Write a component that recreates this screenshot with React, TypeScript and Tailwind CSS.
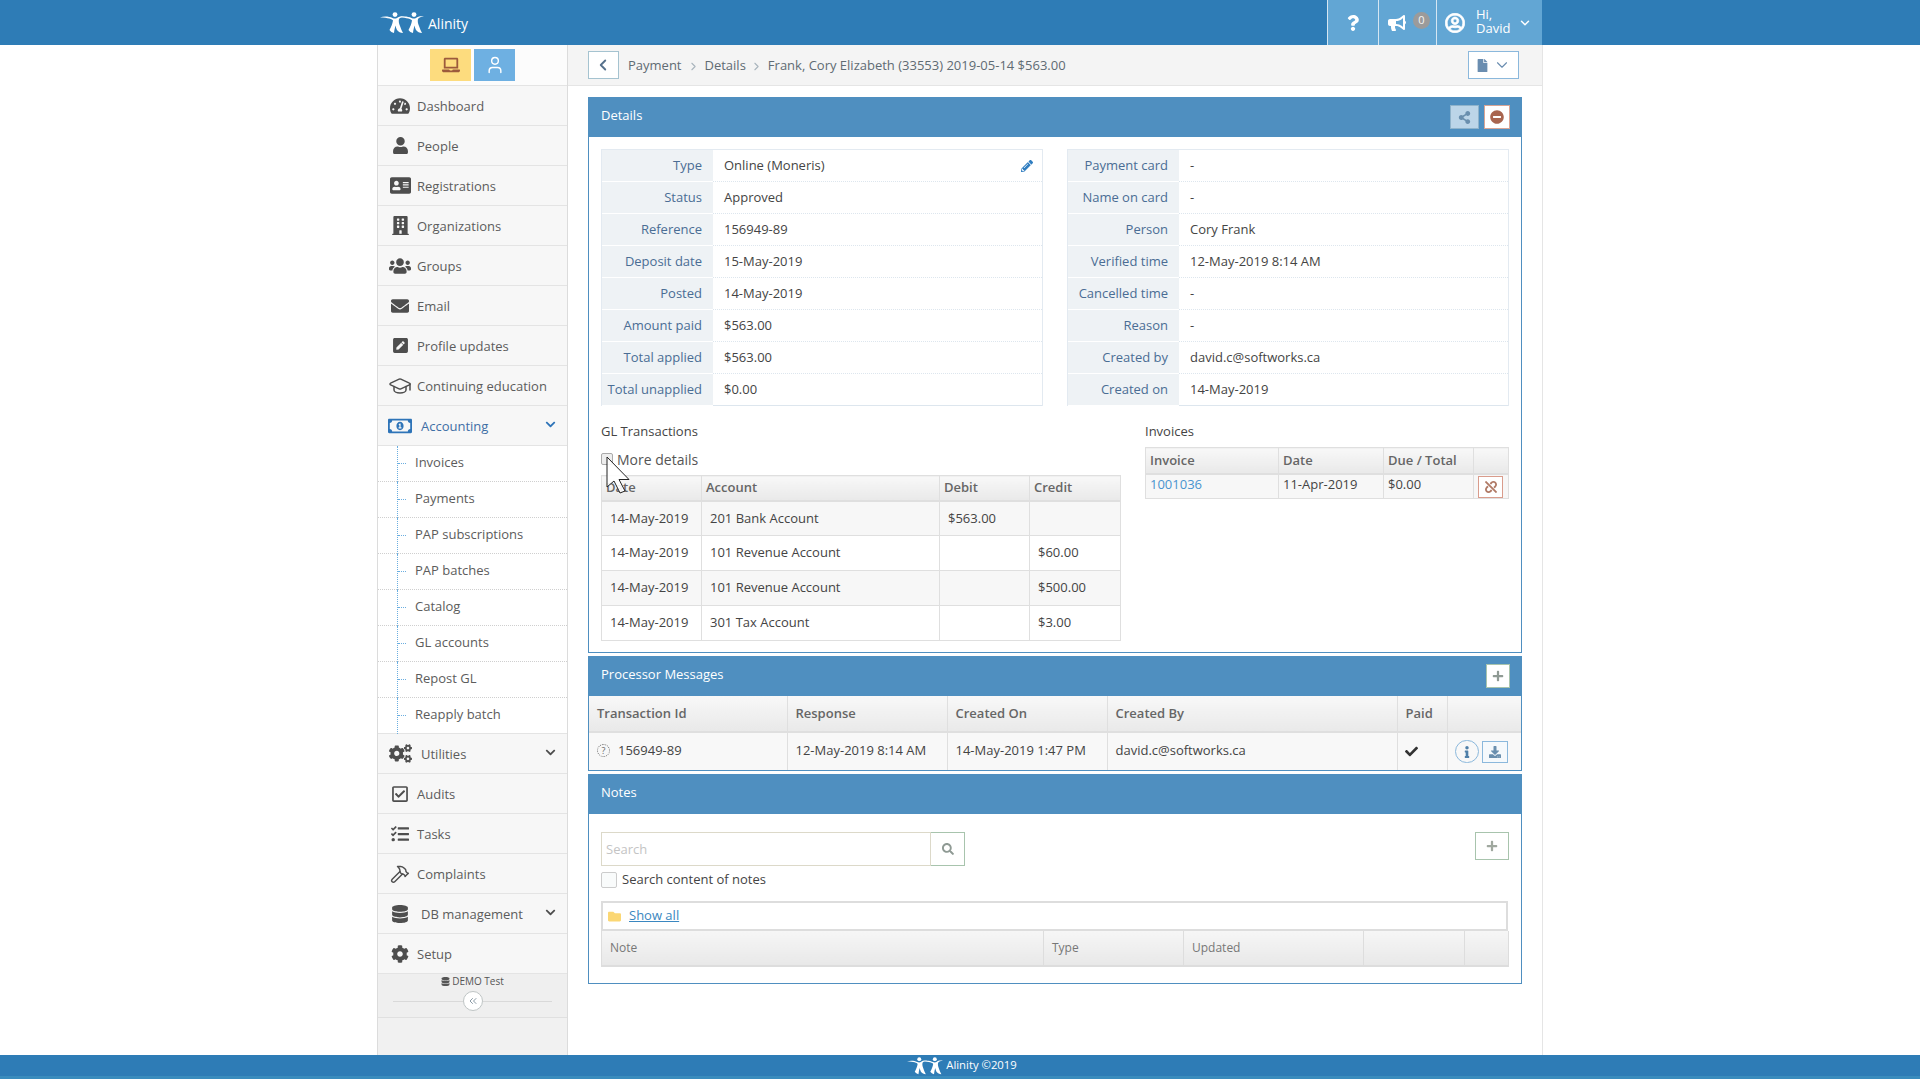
import * as React from "react";
import { ChevronDown, ChevronLeft, ChevronRight, ChevronsLeft, GraduationCap, Hammer, User } from "lucide-react";
import {
  FaAddressCard,
  FaBullhorn,
  FaCheck,
  FaChevronDown,
  FaCog,
  FaCogs,
  FaDatabase,
  FaDownload,
  FaEnvelope,
  FaFile,
  FaFolder,
  FaInfo,
  FaLaptop,
  FaMinusCircle,
  FaPencilAlt,
  FaPenSquare,
  FaPlus,
  FaQuestion,
  FaRegCheckSquare,
  FaRegMoneyBillAlt,
  FaRegUserCircle,
  FaSearch,
  FaShareAlt,
  FaTachometerAlt,
  FaTasks,
  FaUnlink,
  FaUser,
  FaUsers,
  FaBuilding,
} from "react-icons/fa";

const accountingLinks = ["Invoices", "Payments", "PAP subscriptions", "PAP batches", "Catalog", "GL accounts", "Repost GL", "Reapply batch"];

const leftDetails = [
  ["Type", "Online (Moneris)"],
  ["Status", "Approved"],
  ["Reference", "156949-89"],
  ["Deposit date", "15-May-2019"],
  ["Posted", "14-May-2019"],
  ["Amount paid", "$563.00"],
  ["Total applied", "$563.00"],
  ["Total unapplied", "$0.00"],
];

const rightDetails = [
  ["Payment card", "-"],
  ["Name on card", "-"],
  ["Person", "Cory Frank"],
  ["Verified time", "12-May-2019 8:14 AM"],
  ["Cancelled time", "-"],
  ["Reason", "-"],
  ["Created by", "david.c@softworks.ca"],
  ["Created on", "14-May-2019"],
];

const glRows = [
  ["14-May-2019", "201 Bank Account", "$563.00", ""],
  ["14-May-2019", "101 Revenue Account", "", "$60.00"],
  ["14-May-2019", "101 Revenue Account", "", "$500.00"],
  ["14-May-2019", "301 Tax Account", "", "$3.00"],
];

function Logo({ className }: { className: string }) {
  const figure =
    "M0 5.5C4 4 9 4.5 12.5 6C14.3 6.8 15.7 6.8 17 6C19 4.6 21.5 4 25 4.6C22 4.8 20 5.6 19 7C18.5 9 18.8 11 20 14C21 17 22 19 23 21C20.5 21 18.5 20 17 18C16.2 16.5 15.8 15 15.5 13.5C15 15.5 14.3 18 14 21C12 20.5 10.5 19.5 9.5 18C11 15 12.5 12 13 8.5C12.5 7 8 5.7 0 5.5Z";
  return (
    <svg viewBox="0 0 44 22" className={className} fill="white">
      <circle cx="15" cy="2.6" r="2.4" />
      <circle cx="34" cy="2.6" r="2.4" />
      <path d={figure} />
      <path d={figure} transform="translate(19 0)" />
    </svg>
  );
}

function NavItem({ icon, label, chevron, active }: { icon: React.ReactNode; label: string; chevron?: boolean; active?: boolean }) {
  return (
    <div className={`flex h-[40px] items-center border-b border-[#e4e4e4] bg-[#f7f7f7] ${active ? "text-[#3f6ea5]" : "text-[#5c5c5c]"}`}>
      <span className={`ml-[10px] flex w-[24px] justify-center ${active ? "text-[#2e74b8]" : "text-[#4e4e4e]"}`}>{icon}</span>
      <span className={`pt-[2px] ${chevron ? "ml-[9px]" : "ml-[5px]"}`}>{label}</span>
      {chevron && <FaChevronDown className={`mb-[2px] ml-auto mr-[11px] size-[11px] ${active ? "text-[#2e74b8]" : "text-[#4e4e4e]"}`} />}
    </div>
  );
}

function SubItem({ label, last }: { label: string; last?: boolean }) {
  return (
    <div className={`relative flex h-[36px] items-center bg-white pb-[2px] pl-[37px] text-[#5c5c5c] ${last ? "border-b border-[#e4e4e4]" : "border-b border-dotted border-[#cfcfcf]"}`}>
      <span className="absolute bottom-[-1px] left-[19px] top-0 border-l border-dotted border-[#6aaee0]" />
      <span className="absolute left-[20px] top-[17px] w-[8px] border-t border-dotted border-[#6aaee0]" />
      {label}
    </div>
  );
}

function Sidebar() {
  return (
    <aside className="flex w-[191px] shrink-0 flex-col border-x border-[#dcdcdc] bg-[#f1f1f1]">
      <div className="flex h-[41px] justify-center gap-[3px] border-b border-[#e4e4e4] bg-[#fcfcfc] pl-[1px] pr-[1px] pt-[4px]">
        <button className="flex h-[32px] w-[41px] items-center justify-center bg-[#fddc7e] text-[#9c5a3c]">
          <FaLaptop size={18} />
        </button>
        <button className="flex h-[32px] w-[41px] items-center justify-center bg-[#6eb0e2] text-white">
          <User size={20} strokeWidth={1.7} />
        </button>
      </div>
      <NavItem icon={<FaTachometerAlt size={20} />} label="Dashboard" />
      <NavItem icon={<FaUser size={17} />} label="People" />
      <NavItem icon={<FaAddressCard size={21} />} label="Registrations" />
      <NavItem icon={<FaBuilding size={19} />} label="Organizations" />
      <NavItem icon={<FaUsers size={22} />} label="Groups" />
      <NavItem icon={<FaEnvelope size={18} />} label="Email" />
      <NavItem icon={<FaPenSquare size={17} />} label="Profile updates" />
      <NavItem icon={<GraduationCap size={24} strokeWidth={1.5} />} label="Continuing education" />
      <NavItem icon={<FaRegMoneyBillAlt size={24} />} label="Accounting" chevron active />
      {accountingLinks.map((link, i) => (
        <SubItem key={link} label={link} last={i === accountingLinks.length - 1} />
      ))}
      <NavItem icon={<FaCogs size={23} />} label="Utilities" chevron />
      <NavItem icon={<FaRegCheckSquare size={18} />} label="Audits" />
      <NavItem icon={<FaTasks size={18} />} label="Tasks" />
      <NavItem icon={<Hammer size={20} strokeWidth={1.7} />} label="Complaints" />
      <NavItem icon={<FaDatabase size={18} />} label="DB management" chevron />
      <NavItem icon={<FaCog size={18} />} label="Setup" />
      <div className="flex h-[44px] flex-col items-center border-b border-[#e0e0e0] bg-[#efefef]">
        <div className="mt-[1px] flex items-center gap-[2px] text-[10px] leading-[12px] text-[#555]">
          <FaDatabase size={9} />
          DEMO Test
        </div>
        <div className="mt-[4px] flex w-[159px] items-center">
          <span className="h-px flex-1 bg-[#d9d9d9]" />
          <span className="flex size-[20px] items-center justify-center rounded-full border border-[#bfc5c5] bg-white text-[#8a9aa5]">
            <ChevronsLeft size={12} />
          </span>
          <span className="h-px flex-1 bg-[#d9d9d9]" />
        </div>
      </div>
    </aside>
  );
}

function Panel({ title, actions, children }: { title: string; actions?: React.ReactNode; children: React.ReactNode }) {
  return (
    <section>
      <div className="flex h-[40px] items-center justify-between bg-[#4f8fc0] pl-[13px] pr-[12px] text-white">
        <h2 className="pb-[2px] text-[13px] font-normal">{title}</h2>
        <div className="flex gap-[5px]">{actions}</div>
      </div>
      <div className="border-x border-b border-[#4f8fc0] bg-white">{children}</div>
    </section>
  );
}

function InfoTable({ rows, edit }: { rows: string[][]; edit?: boolean }) {
  return (
    <div className="w-[442px] border-t border-r border-l border-[#e3eaf1]">
      {rows.map(([label, value], i) => (
        <div key={label} className="flex h-[32px]">
          <div className="flex w-[111px] items-center justify-end border-b border-white bg-[#eef2f5] pr-[11px] text-[#4a6d94]">{label}</div>
          <div className={`flex flex-1 items-center justify-between border-b border-[#dde6ee] pl-[11px] pr-[9px] text-[#444] ${i === rows.length - 1 ? "border-solid" : "border-dotted"}`}>
            {value}
            {edit && i === 0 && <FaPencilAlt size={12} className="text-[#2f7dc0]" />}
          </div>
        </div>
      ))}
    </div>
  );
}

const thClass = "border border-[#dfdfdf] border-b-2 bg-gradient-to-b from-[#f8f8f8] to-[#e9e9e9] px-[4px] text-left font-semibold text-[#666]";
const tdClass = "border border-[#dfdfdf] px-[8px] text-[#444]";

function GlTable() {
  return (
    <table className="w-[519px] table-fixed border-collapse">
      <colgroup>
        <col className="w-[100px]" />
        <col className="w-[238px]" />
        <col className="w-[90px]" />
        <col className="w-[91px]" />
      </colgroup>
      <thead>
        <tr className="h-[25px]">
          {["Date", "Account", "Debit", "Credit"].map((h) => (
            <th key={h} className={thClass}>{h}</th>
          ))}
        </tr>
      </thead>
      <tbody>
        {glRows.map((row, i) => (
          <tr key={i} className={`h-[35px] ${i % 2 === 0 ? "bg-[#f7f7f7]" : "bg-white"}`}>
            {row.map((cell, j) => (
              <td key={j} className={tdClass}>{cell}</td>
            ))}
          </tr>
        ))}
      </tbody>
    </table>
  );
}

function InvoiceTable() {
  return (
    <table className="w-[363px] table-fixed border-collapse">
      <colgroup>
        <col className="w-[133px]" />
        <col className="w-[105px]" />
        <col className="w-[90px]" />
        <col className="w-[35px]" />
      </colgroup>
      <thead>
        <tr className="h-[26px]">
          {["Invoice", "Date", "Due / Total", ""].map((h) => (
            <th key={h} className={thClass}>{h}</th>
          ))}
        </tr>
      </thead>
      <tbody>
        <tr className="h-[25px] bg-[#f7f7f7]">
          <td className="border border-[#dfdfdf] px-[4px] pb-[3px] text-[#4a94cf]">1001036</td>
          <td className="border border-[#dfdfdf] px-[4px] pb-[3px] text-[#444]">11-Apr-2019</td>
          <td className="border border-[#dfdfdf] px-[4px] pb-[3px] text-[#444]">$0.00</td>
          <td className="border border-[#dfdfdf] p-0">
            <button className="ml-[4px] mt-[1px] flex h-[22px] w-[25px] items-center justify-center border border-[#d99c8c] bg-white text-[#b07a66]">
              <FaUnlink size={12} />
            </button>
          </td>
        </tr>
      </tbody>
    </table>
  );
}

function ProcessorTable() {
  const heads = ["Transaction Id", "Response", "Created On", "Created By", "Paid", ""];
  return (
    <table className="w-full table-fixed border-collapse">
      <colgroup>
        <col className="w-[198px]" />
        <col className="w-[160px]" />
        <col className="w-[160px]" />
        <col className="w-[290px]" />
        <col className="w-[50px]" />
        <col />
      </colgroup>
      <thead>
        <tr className="h-[36px]">
          {heads.map((h) => (
            <th key={h} className="border-x border-b-2 border-[#dfdfdf] bg-gradient-to-b from-[#f8f8f8] to-[#e9e9e9] px-[8px] text-left font-semibold text-[#666] first:border-l-0 last:border-r-0">{h}</th>
          ))}
        </tr>
      </thead>
      <tbody>
        <tr className="h-[38px] bg-[#f8f8f8] text-[#444]">
          <td className="border-r border-[#dfdfdf] px-[8px] pb-[2px]">
            <span className="flex items-center gap-[8px]">
              <span className="flex size-[13px] items-center justify-center rounded-full border border-dotted border-[#666] text-[9px] text-[#666]">?</span>
              156949-89
            </span>
          </td>
          <td className="border-r border-[#dfdfdf] px-[8px] pb-[2px]">12-May-2019 8:14 AM</td>
          <td className="border-r border-[#dfdfdf] px-[8px] pb-[2px]">14-May-2019 1:47 PM</td>
          <td className="border-r border-[#dfdfdf] px-[8px] pb-[2px]">david.c@softworks.ca</td>
          <td className="border-r border-[#dfdfdf] px-[7px]">
            <FaCheck size={13} className="text-[#333]" />
          </td>
          <td className="pl-[7px]">
            <div className="flex items-center gap-[3px]">
              <span className="flex h-[23px] w-[24px] items-center justify-center rounded-full border border-[#8bb8dc] text-[#4f7fa8]">
                <FaInfo size={12} />
              </span>
              <button className="flex h-[22px] w-[26px] items-center justify-center border border-[#8bb8dc] bg-[#f5f9fc] text-[#6a8fae]">
                <FaDownload size={12} />
              </button>
            </div>
          </td>
        </tr>
      </tbody>
    </table>
  );
}

function NotesTable() {
  return (
    <div className="mt-[13px] w-[907px]">
      <div className="flex h-[30px] items-center gap-[8px] border-2 border-[#ddd] pl-[5px]">
        <FaFolder size={13} className="text-[#fbd774]" />
        <a href="#" className="text-[#3a87c0] underline">Show all</a>
      </div>
      <table className="w-full table-fixed border-collapse">
        <colgroup>
          <col className="w-[442px]" />
          <col className="w-[140px]" />
          <col className="w-[180px]" />
          <col className="w-[101px]" />
          <col className="w-[44px]" />
        </colgroup>
        <thead>
          <tr className="h-[35px]">
            {["Note", "Type", "Updated", "", ""].map((h, i) => (
              <th key={i} className="border-x border-b-2 border-[#ddd] bg-gradient-to-b from-[#f6f6f6] to-[#e8e8e8] px-[8px] text-left text-[12px] font-normal text-[#777]">{h}</th>
            ))}
          </tr>
        </thead>
      </table>
    </div>
  );
}

export default function App() {
  return (
    <div className="relative flex h-screen flex-col overflow-hidden bg-white font-['Open_Sans',sans-serif] text-[13px] text-[#444]">
      <header className="h-[45px] shrink-0 bg-[#2e7cb6] text-white">
        <div className="ml-[377px] flex h-full w-[1165px] items-center">
          <Logo className="ml-[3px] h-[22px] w-[44px]" />
          <span className="ml-[4px] pt-[1px] text-[14px]">Alinity</span>
          <div className="ml-auto flex h-full bg-[#62a6d4]">
            <div className="flex w-[51px] items-center justify-center border-l border-[#d5e6f2]">
              <FaQuestion size={16} />
            </div>
            <div className="flex w-[58px] items-center justify-center gap-[7px] border-l border-[#d5e6f2] pl-[3px]">
              <FaBullhorn size={18} />
              <span className="mb-[5px] flex size-[17px] items-center justify-center rounded-full bg-[#9b9b9b] text-[11px] text-[#f5f5f5]">0</span>
            </div>
            <div className="flex w-[106px] items-center border-l border-[#d5e6f2] pl-[8px]">
              <FaRegUserCircle size={20} stroke="currentColor" strokeWidth={20} />
              <span className="mb-[3px] ml-[11px] text-[13px] leading-[14px]">
                Hi,
                <br />
                David
              </span>
              <ChevronDown size={14} strokeWidth={2.5} className="ml-[8px]" />
            </div>
          </div>
        </div>
      </header>

      <div className="ml-[377px] flex min-h-0 w-[1166px] flex-1">
        <Sidebar />
        <main className="w-[975px] border-r border-[#e5e5e5]">
          <div className="flex h-[41px] items-center border-b border-[#e5e5e5] bg-[#f4f4f4] pl-[20px] pr-[23px] text-[#5f6b73]">
            <button className="flex h-[28px] w-[31px] items-center justify-center border border-[#a5c3d0] bg-white text-[#56718c]">
              <ChevronLeft size={18} strokeWidth={2.5} className="-ml-[2px]" />
            </button>
            <span className="ml-[9px] mt-[2px]">Payment</span>
            <ChevronRight size={13} className="mx-[5px] mt-[2px] text-[#a9b5bd]" />
            <span className="mt-[2px]">Details</span>
            <ChevronRight size={13} className="mx-[5px] mt-[2px] -translate-x-px text-[#a9b5bd]" />
            <span className="-ml-px mt-[2px]">Frank, Cory Elizabeth (33553) 2019-05-14 $563.00</span>
            <button className="ml-auto flex h-[28px] w-[51px] items-center justify-center gap-[4px] border border-[#8bb8dc] bg-white text-[#6a8db0]">
              <FaFile size={13} />
              <ChevronDown size={18} strokeWidth={1.5} />
            </button>
          </div>

          <div className="flex flex-col gap-[3px] px-[20px] pt-[11px]">
            <Panel
              title="Details"
              actions={
                <>
                  <button className="flex h-[24px] w-[29px] items-center justify-center border border-[#8fb3cb] bg-[#bcd5e8] text-[#6a8fae]">
                    <FaShareAlt size={13} />
                  </button>
                  <button className="flex h-[24px] w-[26px] items-center justify-center border border-[#d9a595] bg-white text-[#a8654f]">
                    <FaMinusCircle size={14} />
                  </button>
                </>
              }
            >
              <div className="px-[12px] pt-[12px] pb-[11px]">
                <div className="flex gap-[24px]">
                  <InfoTable rows={leftDetails} edit />
                  <InfoTable rows={rightDetails} />
                </div>
                <div className="mt-[15px] flex">
                  <div className="w-[545px]">
                    <div className="h-[20px] leading-[20px]">GL Transactions</div>
                    <label className="mt-[8px] flex h-[20px] items-center gap-[4px] text-[14px] text-[#555]">
                      <span className="size-[12px] rounded-[2px] border border-[#aaa] bg-[#eee]" />
                      More details
                    </label>
                    <div className="mt-[6px]">
                      <GlTable />
                    </div>
                  </div>
                  <div>
                    <div className="h-[20px] leading-[20px]">Invoices</div>
                    <div className="mt-[6px]">
                      <InvoiceTable />
                    </div>
                  </div>
                </div>
              </div>
            </Panel>

            <Panel
              title="Processor Messages"
              actions={
                <button className="flex h-[24px] w-[24px] items-center justify-center border border-[#a8c4ad] bg-white text-[#8f9a94]">
                  <FaPlus size={12} />
                </button>
              }
            >
              <ProcessorTable />
            </Panel>

            <Panel title="Notes">
              <div className="px-[12px] pt-[18px] pb-[16px]">
                <div className="flex items-start justify-between">
                  <div className="flex h-[34px]">
                    <input readOnly placeholder="Search" className="h-full w-[330px] border border-[#dcd9c9] px-[4px] text-[13px] placeholder:text-[#c4c4c4]" />
                    <button className="flex h-full w-[34px] items-center justify-center border border-l-0 border-[#a8c4ad] text-[#8f9a94]">
                      <FaSearch size={12} />
                    </button>
                  </div>
                  <button className="flex h-[28px] w-[34px] items-center justify-center border border-[#a8c4ad] text-[#a0a89f]">
                    <FaPlus size={12} />
                  </button>
                </div>
                <label className="mt-[6px] flex h-[16px] items-center gap-[5px] text-[13px] text-[#444]">
                  <span className="size-[16px] rounded-[2px] border border-[#ccc] bg-[#f9fbfb]" />
                  Search content of notes
                </label>
                <NotesTable />
              </div>
            </Panel>
          </div>
        </main>
      </div>

      <footer className="flex h-[24px] shrink-0 items-center justify-center gap-[3px] border-b-[3px] border-[#3a8cbd] bg-[#2e7cb6] pl-[4px] text-[11.3px] text-white">
        <Logo className="h-[18px] w-[36px]" />
        Alinity ©2019
      </footer>

      <svg viewBox="0 0 24 38" className="absolute left-[606px] top-[456px] h-[38px] w-[24px]">
        <path d="M1 1V31L8 25L14 37L19 35L13 23.5H23Z" fill="white" fillOpacity="0.9" stroke="#222" strokeWidth="1" />
      </svg>
    </div>
  );
}
